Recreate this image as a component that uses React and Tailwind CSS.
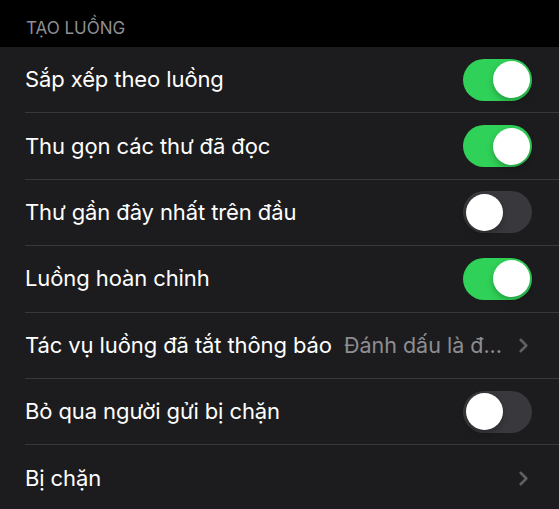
import { ChevronRight } from 'lucide-react';

const rows = [
  { label: 'Sắp xếp theo luồng', type: 'toggle', on: true },
  { label: 'Thu gọn các thư đã đọc', type: 'toggle', on: true },
  { label: 'Thư gần đây nhất trên đầu', type: 'toggle', on: false },
  { label: 'Luồng hoàn chỉnh', type: 'toggle', on: true },
  { label: 'Tác vụ luồng đã tắt thông báo', type: 'link', value: 'Đánh dấu là đ...' },
  { label: 'Bỏ qua người gửi bị chặn', type: 'toggle', on: false },
  { label: 'Bị chặn', type: 'link' },
];

function Toggle({ on }) {
  return (
    <div
      className={`relative w-[69px] h-[42px] rounded-full shrink-0 ${on ? 'bg-[#30d158]' : 'bg-[#39393d]'}`}
    >
      <div
        className={`absolute top-[2.5px] w-[37px] h-[37px] rounded-full bg-white shadow-[0_3px_6px_rgba(0,0,0,0.25)] ${on ? 'right-[2.5px]' : 'left-[2.5px]'}`}
      />
    </div>
  );
}

export default function App() {
  return (
    <div className="w-[559px] h-[509px] overflow-hidden bg-black font-['Inter','Liberation_Sans',sans-serif]">
      <div className="h-[47px] flex items-end pb-[6px] pl-[26px] text-[17px] text-[#8e8e93]">
        TẠO LUỒNG
      </div>
      <div className="bg-[#1c1c1e]">
        {rows.map((row, i) => (
          <div key={i} className="pl-[25px]">
            <div
              className={`h-[66.4px] flex items-center pr-[27px] ${i < rows.length - 1 ? 'border-b border-[#38383a]' : ''}`}
            >
              <span className="text-[22px] text-white tracking-[-0.1px] whitespace-nowrap">{row.label}</span>
              <div className="flex-1" />
              {row.type === 'toggle' ? (
                <Toggle on={row.on} />
              ) : (
                <div className="flex items-center gap-[10px] -mr-[3px]">
                  {row.value && (
                    <span className="text-[21.5px] text-[#8d8d92] whitespace-nowrap">{row.value}</span>
                  )}
                  <ChevronRight className="w-[23px] h-[23px] text-[#5f5f64]" strokeWidth={2.6} />
                </div>
              )}
            </div>
          </div>
        ))}
      </div>
    </div>
  );
}
